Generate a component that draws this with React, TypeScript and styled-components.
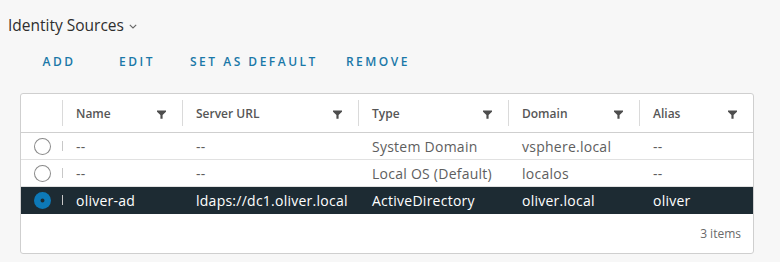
import React from 'react';
import styled, { createGlobalStyle } from 'styled-components';

interface Source {
  name: string;
  url: string;
  type: string;
  domain: string;
  alias: string;
  selected?: boolean;
}

const sources: Source[] = [
  { name: '--', url: '--', type: 'System Domain', domain: 'vsphere.local', alias: '--' },
  { name: '--', url: '--', type: 'Local OS (Default)', domain: 'localos', alias: '--' },
  {
    name: 'oliver-ad',
    url: 'ldaps://dc1.oliver.local',
    type: 'ActiveDirectory',
    domain: 'oliver.local',
    alias: 'oliver',
    selected: true,
  },
];

const columns = ['Name', 'Server URL', 'Type', 'Domain', 'Alias'];

const GlobalStyle = createGlobalStyle`
  body {
    margin: 0;
    background: #f7f7f7;
    font-family: "Open Sans", "Liberation Sans", sans-serif;
  }
`;

const FilterIcon = () => (
  <svg width="9" height="9" viewBox="0 0 10 10">
    <path d="M0 0.5 H10 V2 L6.2 5.6 V9.6 H3.8 V5.6 L0 2 Z" fill="#4d4d4d" />
  </svg>
);

const Chevron = () => (
  <svg width="8" height="5" viewBox="0 0 8 5">
    <path d="M0.8 0.8 L4 4 L7.2 0.8" fill="none" stroke="#666" strokeWidth="1.1" />
  </svg>
);

export default function App() {
  return (
    <>
      <GlobalStyle />
      <Page>
        <Title>
          Identity Sources
          <Chevron />
        </Title>
        <Toolbar>
          <FlatButton>Add</FlatButton>
          <FlatButton>Edit</FlatButton>
          <FlatButton>Set as default</FlatButton>
          <FlatButton>Remove</FlatButton>
        </Toolbar>
        <Grid>
          <HeaderRow>
            <HeadCell />
            {columns.map((c) => (
              <HeadCell key={c}>
                <span>{c}</span>
                <FilterIcon />
              </HeadCell>
            ))}
          </HeaderRow>
          {sources.map((s, i) => (
            <Row key={i} $selected={!!s.selected}>
              <RadioCell>
                <Radio $checked={!!s.selected} />
              </RadioCell>
              <Cell $first>{s.name}</Cell>
              <Cell>{s.url}</Cell>
              <Cell>{s.type}</Cell>
              <Cell>{s.domain}</Cell>
              <Cell>{s.alias}</Cell>
            </Row>
          ))}
          <Footer>3 items</Footer>
        </Grid>
      </Page>
    </>
  );
}

const Page = styled.div`
  padding: 13px 0 0 0;
  width: 780px;
  height: 262px;
  box-sizing: border-box;
`;

const Title = styled.div`
  display: flex;
  align-items: center;
  gap: 5px;
  padding-left: 8px;
  font-size: 15.5px;
  line-height: 24px;
  color: #2e2e2e;

  svg {
    margin-top: 3px;
  }
`;

const Toolbar = styled.div`
  display: flex;
  gap: 6px;
  margin: 6px 0 0 22px;
  height: 36px;
`;

const FlatButton = styled.button`
  min-width: 72px;
  padding: 0 10px 0 12px;
  border: none;
  background: none;
  font-family: "Open Sans", "Liberation Sans", sans-serif;
  font-size: 12px;
  font-weight: 600;
  letter-spacing: 2.5px;
  text-transform: uppercase;
  color: #1a78a8;
  cursor: pointer;
`;

const Grid = styled.div`
  margin: 14px 0 0 20px;
  width: 734px;
  box-sizing: border-box;
  background: #fff;
  border: 1px solid #cfcfcf;
  border-radius: 3px;
`;

const cols = '41px 120px 176px 150px 131px 1fr';

const HeaderRow = styled.div`
  display: grid;
  grid-template-columns: ${cols};
  height: 38px;
  border-bottom: 1px solid #cfcfcf;
`;

const HeadCell = styled.div`
  display: flex;
  align-items: center;
  justify-content: space-between;
  padding: 0 16px 0 14px;
  font-size: 12px;
  font-weight: 600;
  color: #565656;
  position: relative;

  & + &::before {
    content: '';
    position: absolute;
    left: 0;
    top: 6px;
    bottom: 6px;
    width: 1px;
    background: #dadada;
  }

  svg {
    margin-top: 3px;
  }
`;

const Row = styled.div<{ $selected: boolean }>`
  display: grid;
  grid-template-columns: ${cols};
  height: 26px;
  align-items: center;
  border-bottom: 1px solid ${(p) => (p.$selected ? '#1d2b33' : '#e1e1e1')};
  background: ${(p) => (p.$selected ? '#1d2b33' : '#fff')};
  color: ${(p) => (p.$selected ? '#fff' : '#5e5e5e')};
  font-size: 14px;
  letter-spacing: 0.25px;
`;

const RadioCell = styled.div`
  display: flex;
  justify-content: center;
  padding-left: 1px;
`;

const Radio = styled.span<{ $checked: boolean }>`
  width: 17px;
  height: 17px;
  box-sizing: border-box;
  border-radius: 50%;
  background: ${(p) => (p.$checked ? '#1d2b33' : '#fff')};
  box-shadow: ${(p) =>
    p.$checked ? 'inset 0 0 0 6.5px #0d79b8' : 'inset 0 0 0 1px #8a8a8a'};
`;

const Cell = styled.div<{ $first?: boolean }>`
  padding-left: 14px;
  white-space: nowrap;
  position: relative;

  &::before {
    content: '';
    display: ${(p) => (p.$first ? 'block' : 'none')};
    position: absolute;
    left: 0;
    top: 50%;
    height: 10px;
    margin-top: -5px;
    width: 1px;
    background: #c8c8c8;
  }
`;

const Footer = styled.div`
  height: 39px;
  display: flex;
  align-items: center;
  justify-content: flex-end;
  padding-right: 12px;
  font-size: 12px;
  color: #6a6a6a;
`;
